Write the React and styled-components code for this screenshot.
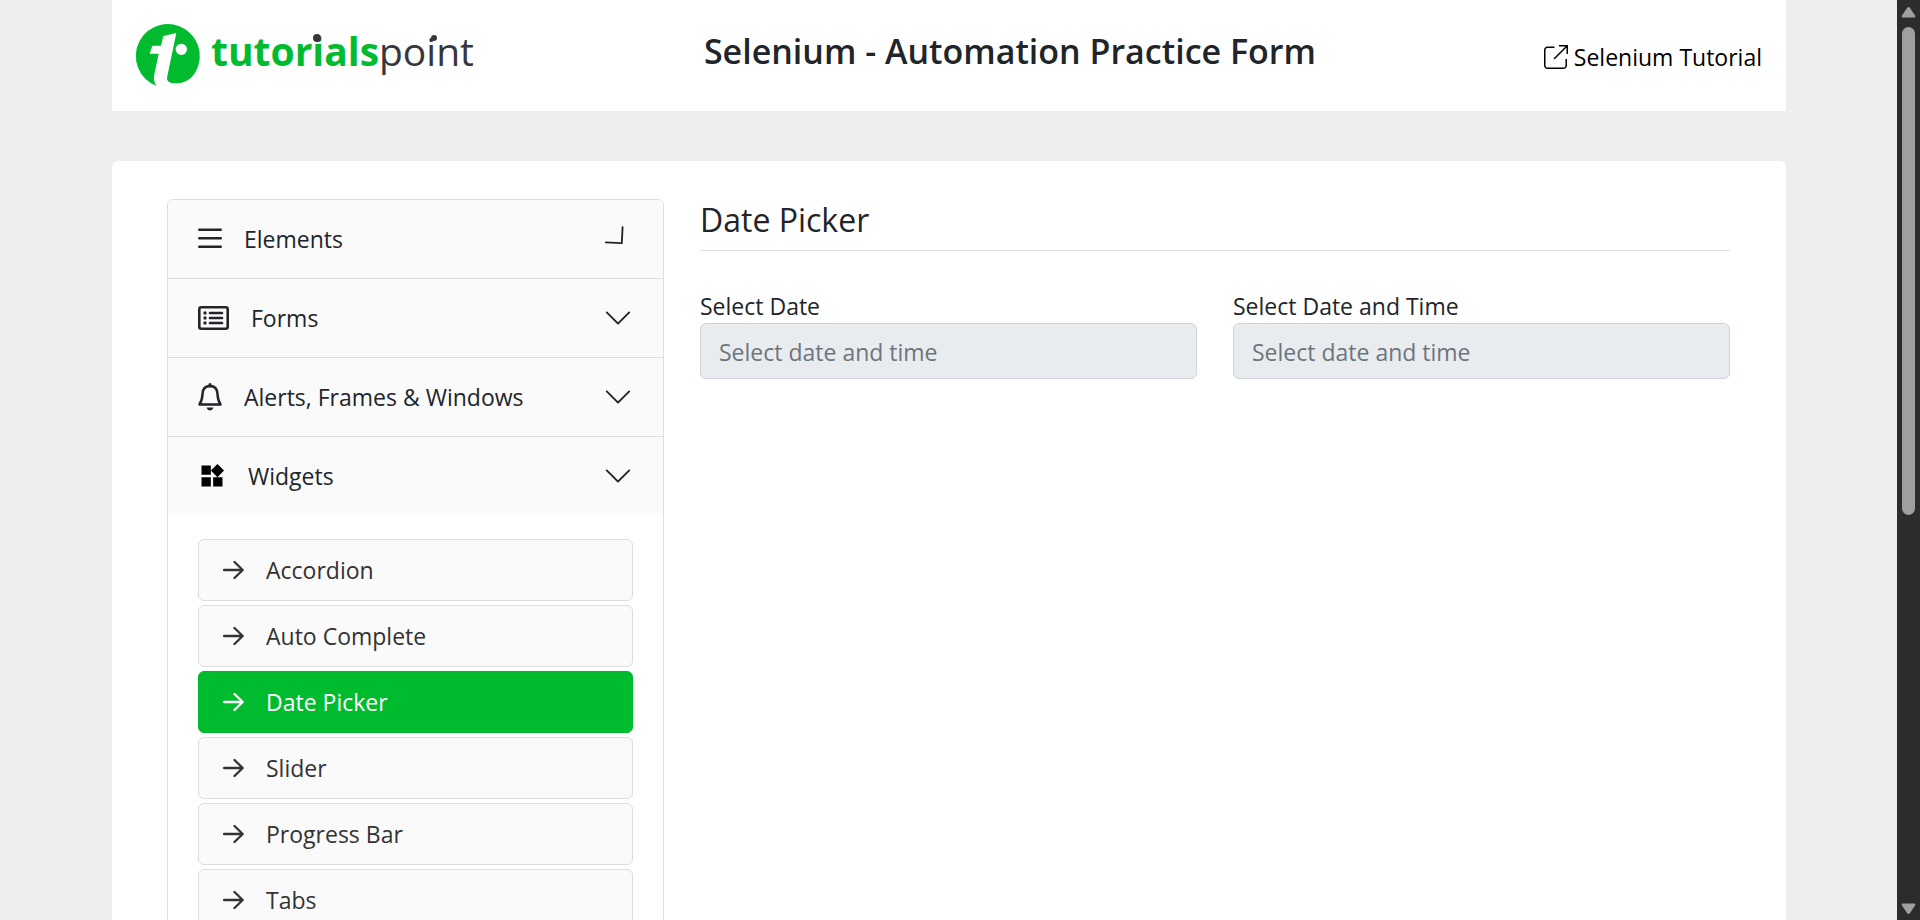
import React from "react";
import styled, { createGlobalStyle, css } from "styled-components";
import { MdWidgets } from "react-icons/md";

const GlobalStyle = createGlobalStyle`
  *, *::before, *::after { box-sizing: border-box; }
  body {
    margin: 0;
    background: #eeeeee;
    color: #212529;
    font-family: "Open Sans", "Noto Sans", sans-serif;
    font-size: 23px;
    line-height: 34px;
  }
  h1, h2, ul { margin: 0; padding: 0; }
`;

const Window = styled.div`
  display: flex;
  height: 100vh;
  overflow: hidden;
`;

const Page = styled.div`
  flex: 1;
  min-width: 0;
  padding: 0 111px 0 112px;
  overflow: hidden;
`;

const Header = styled.header`
  display: flex;
  justify-content: space-between;
  height: 111px;
  padding: 24px;
  background: #fff;
`;

const HomeLink = styled.a`
  display: block;
  height: 64px;
`;

const Title = styled.h1`
  padding-top: 3px;
  font-size: 34px;
  font-weight: 600;
  line-height: 48px;
  white-space: nowrap;
`;

const TutorialLink = styled.a`
  display: flex;
  align-items: center;
  gap: 6px;
  height: 36px;
  margin-top: 15px;
  color: #000;
  text-decoration: none;
  white-space: nowrap;
`;

const Card = styled.main`
  display: grid;
  grid-template-columns: repeat(3, minmax(0, 1fr));
  align-items: start;
  column-gap: 36px;
  min-height: 1200px;
  margin-top: 50px;
  padding: 38px 56px 38px 55px;
  border-radius: 6px;
  background: #fff;
`;

const Sidebar = styled.nav`
  border: 1px solid #dedfe0;
  border-radius: 6px;
  overflow: hidden;
`;

const Section = styled.section`
  & + & { border-top: 1px solid #dedfe0; }
`;

const SectionButton = styled.button`
  display: flex;
  align-items: center;
  gap: 22px;
  width: 100%;
  height: 78px;
  padding: 0 30px;
  border: 0;
  background: #fafafa;
  color: #212529;
  font: inherit;
  text-align: left;

  svg { flex: none; }
`;

const SectionName = styled.span`
  flex: 1;
  white-space: nowrap;
`;

const Chevron = styled.svg`
  transform: rotate(${(p) => p.$angle}deg);
`;

const SubList = styled.ul`
  display: grid;
  gap: 4px;
  padding: 24px 30px;
  list-style: none;
`;

const SubLink = styled.a`
  display: flex;
  align-items: center;
  gap: 22px;
  height: 62px;
  padding: 0 24px;
  border: 1px solid #dcdddd;
  border-radius: 6px;
  background: #fafafa;
  color: #333;
  text-decoration: none;
  ${(p) =>
    p.$active &&
    css`
      border-color: #00b92e;
      background: #00bb2e;
      color: #fff;
    `}
`;

const Content = styled.div`
  display: grid;
  grid-column: span 2;
  grid-template-columns: subgrid;
`;

const ContentTitle = styled.h2`
  grid-column: 1 / -1;
  height: 52px;
  margin-bottom: 38px;
  border-bottom: 1px solid #dee2e6;
  font-size: 32px;
  font-weight: 400;
  line-height: 42px;
`;

const Field = styled.label`
  display: block;
`;

const DateInput = styled.input`
  display: block;
  width: 100%;
  height: 56px;
  padding: 2px 18px 0;
  border: 1px solid #ced4da;
  border-radius: 6px;
  outline: 0;
  background: #e9ecef;
  color: #212529;
  font: inherit;

  &::placeholder { color: #6c757d; opacity: 1; }
`;

const ScrollTrack = styled.div`
  display: flex;
  flex-direction: column;
  align-items: center;
  flex: none;
  width: 23px;
  padding: 6px 0 5px;
  background: #2c2c2c;

  svg { flex: none; }
`;

const ScrollThumb = styled.div`
  flex: 488 1 0;
  width: 13px;
  margin-top: 9px;
  border-radius: 7px;
  background: #9f9f9f;
`;

const ScrollRest = styled.div`
  flex: 388 1 0;
`;

const Brand = () => (
  <svg width="340" height="64" viewBox="0 0 340 64" role="img" aria-label="tutorialspoint" overflow="visible">
    <g transform="scale(0.33333) translate(-108 -72)">
      <path
        fill="#00bb2e"
        d="M170 258 A96 96 0 1 1 275 232 Q255 250 230 250 C208 250 198 245 202 228 L229 99 L190 108 L183 137 L157 137 L149 161 L176 161 L162 228 Q160 245 170 258 Z"
      />
      <circle cx="244" cy="148" r="17" fill="#fff" />
    </g>
    <text x="75" y="42" fontFamily="Open Sans" fontSize="39" fontWeight="700" fill="#00bb2e">tutorials</text>
    <text x="243" y="42" fontFamily="Open Sans" fontSize="39" fontWeight="400" fill="#37373b">point</text>
    <circle cx="181" cy="14" r="4" fill="#37373b" />
    <circle cx="298" cy="14" r="3" fill="#37373b" />
  </svg>
);

const ExternalIcon = () => (
  <svg width="24" height="24" viewBox="0 0 24 24" fill="none" stroke="currentColor" strokeWidth="1.5">
    <path d="M10.500 2.250H3.500A2.750 2.750 0 0 0 .75 5v15.500A2.750 2.750 0 0 0 3.500 23.250H19.500A2.750 2.750 0 0 0 22.250 20.500V14" />
    <path d="M15 .75H23.250V9M23 1L10 14" />
  </svg>
);

const ListIcon = () => (
  <svg width="24" height="22" viewBox="0 0 24 22" fill="none" stroke="currentColor" strokeWidth="2.500" strokeLinecap="round">
    <path d="M1.250 1.700h21.500M1.250 10.200h21.500M1.250 18.700h21.500" />
  </svg>
);

const FormIcon = () => (
  <svg width="31" height="24" viewBox="0 0 31 24" fill="none" stroke="currentColor" strokeWidth="2.600" strokeLinecap="round">
    <rect x="1.300" y="1.300" width="28.400" height="21.400" rx="2" />
    <path d="M12 7h12M12 12h12M12 17h12" />
    <path strokeWidth="3.400" d="M7 7h.01M7 12h.01M7 17h.01" />
  </svg>
);

const BellIcon = () => (
  <svg width="24" height="28" viewBox="0 0 24 28" fill="none" stroke="currentColor" strokeWidth="2.500" strokeLinejoin="round">
    <path d="M12 3C7 3 4.700 6.500 4.500 11C4.300 16.500 3.500 18.500 1.500 21.500H22.500C20.500 18.500 19.700 16.500 19.500 11C19.300 6.500 17 3 12 3Z" />
    <path d="M12 1.700V3" strokeWidth="3.200" strokeLinecap="round" />
    <path d="M8.500 24.500H15.500Q14.500 27.500 12 27.500T8.500 24.500Z" fill="currentColor" stroke="none" />
  </svg>
);

const WidgetIcon = () => <MdWidgets size={28} color="#000" />;

const ArrowIcon = () => (
  <svg width="21" height="20" viewBox="0 0 21 20" fill="none" stroke="currentColor" strokeWidth="2.300" strokeLinecap="round" strokeLinejoin="round">
    <path d="M1.100 10H19.500M11.500 2L19.700 10L11.500 18" />
  </svg>
);

const ChevronIcon = ({ angle = 0 }) => (
  <Chevron $angle={angle} width="30" height="30" viewBox="0 0 16 16" fill="#212529">
    <path d="M1.646 4.646a.5.5 0 0 1 .708 0L8 10.293l5.646-5.647a.5.5 0 0 1 .708.708l-6 6a.5.5 0 0 1-.708 0l-6-6a.5.5 0 0 1 0-.708z" />
  </Chevron>
);

const ScrollArrow = ({ down }) => (
  <svg width="15" height="12" viewBox="0 0 15 12" fill="#9f9f9f">
    <path d={down ? "M1.500 .5H13.500Q15 1 14 2.500L9 10Q7.500 12 6 10L1 2.500Q0 1 1.500 .5Z" : "M1.500 11.500H13.500Q15 11 14 9.500L9 2Q7.500 0 6 2L1 9.500Q0 11 1.500 11.500Z"} />
  </svg>
);

const sections = [
  { name: "Elements", Icon: ListIcon, angle: -42 },
  { name: "Forms", Icon: FormIcon },
  { name: "Alerts, Frames & Windows", Icon: BellIcon },
  {
    name: "Widgets",
    Icon: WidgetIcon,
    items: ["Accordion", "Auto Complete", "Date Picker", "Slider", "Progress Bar", "Tabs"],
  },
];

export default function App() {
  return (
    <>
      <GlobalStyle />
      <Window>
        <Page>
          <Header>
            <HomeLink href="#">
              <Brand />
            </HomeLink>
            <Title>Selenium - Automation Practice Form</Title>
            <TutorialLink href="#">
              <ExternalIcon />
              Selenium Tutorial
            </TutorialLink>
          </Header>
          <Card>
            <Sidebar>
              {sections.map(({ name, Icon, angle, items }) => (
                <Section key={name}>
                  <SectionButton type="button">
                    <Icon />
                    <SectionName>{name}</SectionName>
                    <ChevronIcon angle={angle} />
                  </SectionButton>
                  {items && (
                    <SubList>
                      {items.map((item) => (
                        <li key={item}>
                          <SubLink href="#" $active={item === "Date Picker"}>
                            <ArrowIcon />
                            {item}
                          </SubLink>
                        </li>
                      ))}
                    </SubList>
                  )}
                </Section>
              ))}
            </Sidebar>
            <Content>
              <ContentTitle>Date Picker</ContentTitle>
              <Field>
                Select Date
                <DateInput type="text" placeholder="Select date and time" readOnly />
              </Field>
              <Field>
                Select Date and Time
                <DateInput type="text" placeholder="Select date and time" readOnly />
              </Field>
            </Content>
          </Card>
        </Page>
        <ScrollTrack>
          <ScrollArrow />
          <ScrollThumb />
          <ScrollRest />
          <ScrollArrow down />
        </ScrollTrack>
      </Window>
    </>
  );
}
